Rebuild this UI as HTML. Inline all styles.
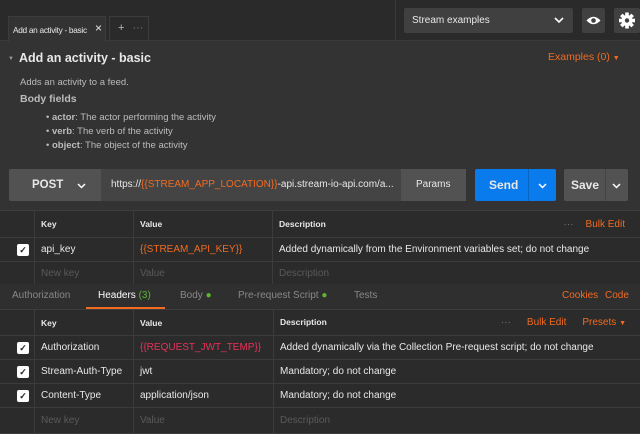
<!DOCTYPE html><html><head><style>
*{margin:0;padding:0;box-sizing:border-box}
body{width:640px;height:434px;overflow:hidden;background:#333;font-family:"Liberation Sans",sans-serif;color:#e8e8e8;position:relative;font-size:10px}
.a{position:absolute}
.or{color:#f26b21}
.tb td{border:1px solid #3c3c3c;height:24px;padding-left:6px;white-space:nowrap;overflow:hidden}
table{border-collapse:collapse;position:absolute;left:-1px;width:642px;background:#2b2b2b;table-layout:fixed;font-size:10px}
th{font-weight:bold;text-align:left;font-size:8.5px;border:1px solid #3c3c3c;padding-left:6px}
.cb{display:inline-block;width:12px;height:12px;background:#fff;border-radius:2px;color:#222;font-size:9px;line-height:12px;text-align:center;font-weight:bold;margin-left:17px}
.ph{color:#5a5a5a}
.ch{position:absolute}
</style></head><body>
<div class="a" style="left:0;top:0;width:640px;height:41px;background:#2a2a2a;border-bottom:1px solid #3a3a3a"></div>
<div class="a" style="left:395px;top:0;width:1px;height:41px;background:#3a3a3a"></div>
<div class="a" style="left:8px;top:16px;width:98px;height:26px;background:#333;border:1px solid #3c3c3c;border-bottom:none;font-size:8.3px;padding:8px 0 0 4px;white-space:nowrap;letter-spacing:-0.3px">Add an activity - basic<span style="position:absolute;left:86px;top:4px;font-size:12px">×</span></div>
<div class="a" style="left:109px;top:16px;width:40px;height:25px;border:1px solid #3c3c3c;border-bottom:none;font-size:11px;padding:5px 0 0 8px;color:#bbb">+ <span style="margin-left:5px;color:#777">···</span></div>
<div class="a" style="left:404px;top:8px;width:169px;height:25px;background:#404040;border-radius:2px;font-size:10px;padding:7px 0 0 8px">Stream examples<svg class="ch" style="left:150px;top:9px" width="10" height="7"><path d="M1 1L5 5L9 1" stroke="#fff" stroke-width="1.6" fill="none"/></svg></div>
<div class="a" style="left:582px;top:8px;width:23px;height:25px;background:#404040;border-radius:2px"><svg width="23" height="25"><path d="M4.5 12.5Q11.5 5 18.5 12.5Q11.5 20 4.5 12.5Z" fill="#fff"/><circle cx="11.5" cy="12.5" r="2.3" fill="#404040"/></svg></div>
<div class="a" style="left:614px;top:8px;width:26px;height:25px;background:#404040;border-radius:2px"><svg width="26" height="25"><g transform="translate(13 12.5)" fill="#fff"><circle r="5.5"/><rect x="-1.8" y="-8" width="3.6" height="16"/><rect x="-1.8" y="-8" width="3.6" height="16" transform="rotate(45)"/><rect x="-1.8" y="-8" width="3.6" height="16" transform="rotate(90)"/><rect x="-1.8" y="-8" width="3.6" height="16" transform="rotate(135)"/><circle r="2.2" fill="#404040"/></g></svg></div>
<div class="a" style="left:8px;top:56px;font-size:6px;color:#999">▼</div>
<div class="a" style="left:19px;top:51px;font-size:12.5px;font-weight:bold">Add an activity - basic</div>
<div class="a or" style="left:548px;top:51px;font-size:10.5px">Examples (0) <span style="font-size:7px">▼</span></div>
<div class="a" style="left:20px;top:77px;font-size:9.5px;color:#bbb">Adds an activity to a feed.</div>
<div class="a" style="left:20px;top:93px;font-size:10.5px;color:#bbb;font-weight:bold">Body fields</div>
<div class="a" style="left:46px;top:111px;font-size:9.5px;color:#bbb;line-height:14px">• <b>actor</b>: The actor performing the activity<br>• <b>verb</b>: The verb of the activity<br>• <b>object</b>: The object of the activity</div>
<div class="a" style="left:9px;top:169px;width:92px;height:32px;background:#525252;border-radius:2px 0 0 2px;font-size:11.5px;font-weight:bold;padding:10px 0 0 23px">POST<svg class="ch" style="left:68px;top:14px" width="9" height="6"><path d="M1 1L4.5 4.5L8 1" stroke="#fff" stroke-width="1.5" fill="none"/></svg></div>
<div class="a" style="left:101px;top:169px;width:300px;height:32px;background:#444;font-size:10px;padding:10px 0 0 10px;white-space:nowrap">https://<span class="or">{{STREAM_APP_LOCATION}}</span>-api.stream-io-api.com/a...</div>
<div class="a" style="left:401px;top:169px;width:65px;height:32px;background:#525252;font-size:10px;padding:10px 0 0 15px">Params</div>
<div class="a" style="left:475px;top:169px;width:81px;height:32px;background:#097bed;border-radius:2px;font-size:12px;font-weight:bold;padding:9px 0 0 14px">Send<span style="position:absolute;left:53px;top:0;width:1px;height:32px;background:#0765c4"></span><svg class="ch" style="left:63px;top:14px" width="9" height="6"><path d="M1 1L4.5 4.5L8 1" stroke="#fff" stroke-width="1.5" fill="none"/></svg></div>
<div class="a" style="left:564px;top:169px;width:64px;height:32px;background:#525252;border-radius:2px;font-size:12px;font-weight:bold;padding:9px 0 0 7px">Save<span style="position:absolute;left:41px;top:0;width:1px;height:32px;background:#444"></span><svg class="ch" style="left:48px;top:14px" width="9" height="6"><path d="M1 1L4.5 4.5L8 1" stroke="#fff" stroke-width="1.5" fill="none"/></svg></div>
<table class="tb" style="top:210px"><colgroup><col style="width:35px"><col style="width:99px"><col style="width:139px"><col></colgroup>
<tr style="height:27px"><th></th><th>Key</th><th>Value</th><th>Description<span style="float:right;font-weight:normal;font-size:10px;color:#f26b21;margin-right:15px"><span style="color:#777;margin-right:12px">···</span>Bulk Edit</span></th></tr>
<tr><td style="padding:0"><span class="cb">✓</span></td><td>api_key</td><td class="or">{{STREAM_API_KEY}}</td><td>Added dynamically from the Environment variables set; do not change</td></tr>
<tr><td></td><td class="ph">New key</td><td class="ph">Value</td><td class="ph">Description</td></tr></table>
<div class="a" style="left:0;top:284px;width:640px;height:25px;background:#2f2f2f;font-size:10px;color:#888">
<span class="a" style="left:12px;top:6px">Authorization</span>
<span class="a" style="left:98px;top:6px;color:#fff">Headers <span style="color:#5cb531">(3)</span></span>
<span class="a" style="left:86px;top:23px;width:79px;height:2px;background:#f26b21"></span>
<span class="a" style="left:180px;top:6px">Body <span style="color:#5cb531">●</span></span>
<span class="a" style="left:238px;top:6px">Pre-request Script <span style="color:#5cb531">●</span></span>
<span class="a" style="left:354px;top:6px">Tests</span>
<span class="a or" style="left:562px;top:6px">Cookies</span><span class="a or" style="left:605px;top:6px">Code</span></div>
<table class="tb" style="top:309px"><colgroup><col style="width:35px"><col style="width:99px"><col style="width:140px"><col></colgroup>
<tr style="height:26px"><th></th><th>Key</th><th>Value</th><th>Description<span style="float:right;font-weight:normal;font-size:10px;color:#f26b21;margin-right:14px"><span style="color:#777;margin-right:16px">···</span>Bulk Edit<span style="margin-left:16px">Presets <span style="font-size:7px">▼</span></span></span></th></tr>
<tr><td style="padding:0"><span class="cb">✓</span></td><td>Authorization</td><td style="color:#e8325a">{{REQUEST_JWT_TEMP}}</td><td>Added dynamically via the Collection Pre-request script; do not change</td></tr>
<tr><td style="padding:0"><span class="cb">✓</span></td><td>Stream-Auth-Type</td><td>jwt</td><td>Mandatory; do not change</td></tr>
<tr><td style="padding:0"><span class="cb">✓</span></td><td>Content-Type</td><td>application/json</td><td>Mandatory; do not change</td></tr>
<tr style="height:26px"><td></td><td class="ph">New key</td><td class="ph">Value</td><td class="ph">Description</td></tr></table>
</body></html>
